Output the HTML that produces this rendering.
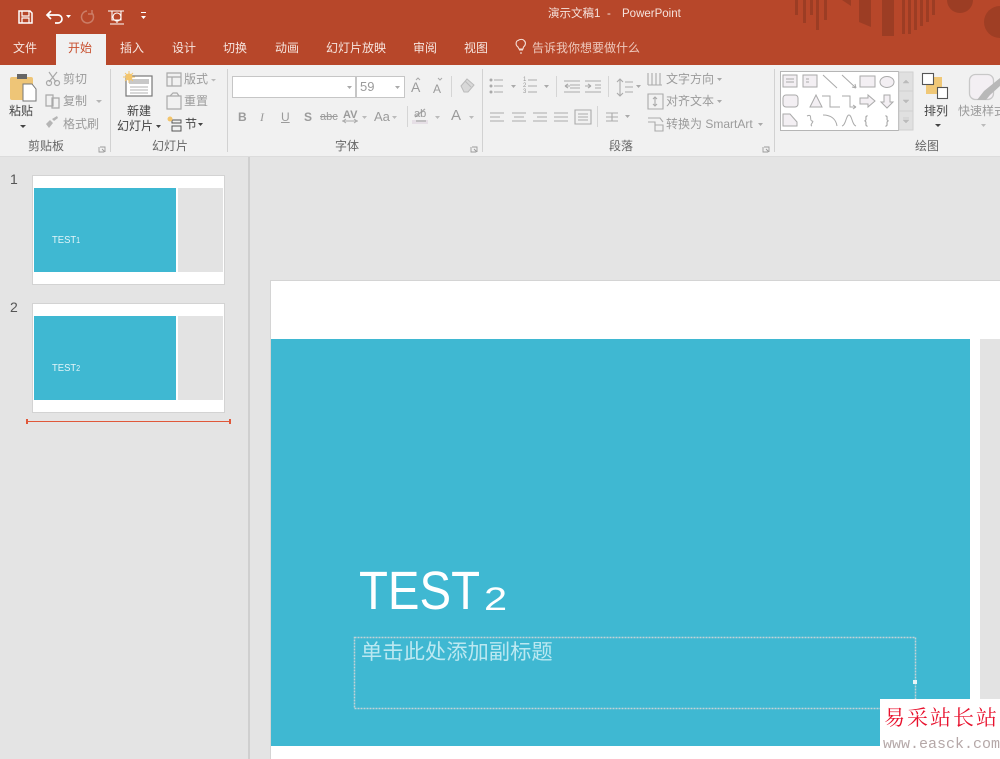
<!DOCTYPE html>
<html lang="zh"><head><meta charset="utf-8"><title>演示文稿1 - PowerPoint</title>
<style>
html,body{margin:0;padding:0}
body{width:1000px;height:759px;overflow:hidden;position:relative;background:#e4e4e4;font-family:"Liberation Sans","Noto Sans CJK SC",sans-serif}
#wrap{position:absolute;left:0;top:0;width:1000px;height:759px;filter:blur(.35px)}
.a,.t{position:absolute}
.t{white-space:nowrap;font-size:12px;line-height:14px;color:#9b9b9b}
.k{color:#444}
.l{color:#666}
.w{color:#fff}
.tab{top:41px;color:#f6e5df}
.sep{position:absolute;top:69px;height:83px;width:1px;background:#d2d2d2}
svg{position:absolute;left:0;top:0}
</style></head><body>
<div id="wrap">
<!-- title bar -->
<div class="a" style="left:0;top:0;width:1000px;height:65px;background:#b7472a"></div>
<div class="a" style="left:56px;top:34px;width:50px;height:31px;background:#f1f1f1"></div>
<div class="a" style="left:0;top:65px;width:1000px;height:91px;background:#f1f1f1;border-bottom:1px solid #dcdcdc"></div>
<div class="a" style="left:248px;top:157px;width:2px;height:602px;background:#cfcfcf"></div>

<svg width="1000" height="759" viewBox="0 0 1000 759">
 <!-- decorative pattern -->
 <g fill="#9c3d24">
  <rect x="795" y="0" width="3" height="15"/><rect x="803" y="0" width="3" height="23"/><rect x="810" y="0" width="3" height="15"/>
  <rect x="816" y="0" width="3" height="30"/><rect x="824" y="0" width="3" height="20"/>
  <path d="M842 0h9v6z"/><path d="M859 0h12v27l-12-5z"/><rect x="882" y="0" width="12" height="36"/>
  <rect x="902" y="0" width="3" height="34"/><rect x="908" y="0" width="3" height="34"/><rect x="914" y="0" width="3" height="30"/><rect x="920" y="0" width="3" height="26"/><rect x="926" y="0" width="3" height="22"/><rect x="932" y="0" width="3" height="15"/>
  <path d="M947 0h26a13 13 0 0 1-26 0z"/>
  <path d="M1000 6a16 16 0 0 0 0 32z" opacity=".9"/>
 </g>
 <!-- quick access -->
 <g fill="none" stroke="#fff" stroke-width="1.500">
  <path d="M19 11h11l2 2v10H19z"/><path d="M22 11v5h7v-5M22 23v-5h7v5" stroke-width="1.200"/>
  <path d="M48 15h10a4 4 0 0 1 0 8h-3M51 11l-4 4 4 4" stroke-width="1.700"/>
  <path d="M87 11a6 6 0 1 0 5 2M92 10v4h-4" stroke="#cb7d67"/>
  <path d="M108 11h16M112 11v9h9v-9" stroke-width="1.100"/><circle cx="117" cy="17" r="4" stroke-width="1.100"/><path d="M117 21v2M110 24h14" stroke-width="1.100"/>
 </g>
 <path d="M66 15h5l-2.500 3z" fill="#fff"/><path d="M141 12h5v1h-5zM141 16h5l-2.500 3z" fill="#fff"/>
 <!-- clipboard -->
 <rect x="10" y="77" width="23" height="23" rx="2" fill="#eec577"/>
 <rect x="17" y="74" width="10" height="5" fill="#666"/>
 <path d="M23 84h9l4 5v12H23z" fill="#fff" stroke="#777"/>
 <path d="M20 125h6l-3 3z" fill="#444"/>
 <g fill="none" stroke="#a8a8a8" stroke-width="1.200">
  <path d="M49 72l7 10M57 72l-8 10"/><circle cx="49" cy="83" r="2.500"/><circle cx="57" cy="83" r="2.500"/>
  <path d="M46 95h7v11h-7zM52 98h7v10h-7z"/>
 </g>
 <path d="M46 124l4-4 3 3-4 5zM52 119l5-3 1 2-4 3z" fill="#b5b5b5"/>
 <path d="M96 100h6l-3 3z" fill="#b5b5b5"/>
 <!-- new slide -->
 <rect x="126" y="76" width="26" height="20" fill="#fff" stroke="#777" stroke-width="1.200"/>
 <rect x="129" y="79" width="20" height="5" fill="#c8c8c8"/>
 <path d="M130 87h18M130 90h18M130 93h18" stroke="#999" stroke-width=".8"/>
 <circle cx="129" cy="77" r="3.500" fill="#f3c56c"/>
 <path d="M129 71v12M123 77h12M125 73l8 8M133 73l-8 8" stroke="#f3c56c"/>
 <path d="M156 125h5l-2.500 3zM198 123h5l-2.500 3z" fill="#444"/>
 <g fill="none" stroke="#aaa" stroke-width="1.200">
  <path d="M167 73h14v13h-14zM167 77h14M172 77v9"/>
  <path d="M167 96h14v13h-14z"/><path d="M170 96l3-3h4l2 3"/>
 </g>
 <path d="M211 79h5l-2.500 2.500z" fill="#bbb"/>
 <path d="M172 120h9v3h-9zM172 126h9v5h-9z" fill="none" stroke="#555"/>
 <circle cx="170" cy="119" r="2.500" fill="#f3c56c"/>
 <!-- font -->
 <rect x="232.500" y="76.500" width="123" height="21" fill="#fff" stroke="#c6c6c6"/>
 <rect x="356.500" y="76.500" width="48" height="21" fill="#fff" stroke="#c6c6c6"/>
 <path d="M347 86h5l-2.500 3zM395 86h5l-2.500 3z" fill="#aaa"/>
 <path d="M416 80l2-2 2 2M438 78l2 2 2-2" stroke="#aaa" fill="none"/>
 <path d="M461 86l6-7 7 6-6 7h-4zM465 81l6 6" fill="#d8d8d8" stroke="#bbb"/>
 <path d="M362 116h5l-2.500 3zM392 116h5l-2.500 3zM435 116h5l-2.500 3zM469 116h5l-2.500 3z" fill="#bbb"/>
 <rect x="412" y="120" width="16" height="4" fill="#e6dfe6"/>
 <path d="M415 117l10-8M416 121h10" stroke="#aaa" stroke-width="1.300"/>
 <path d="M342 121h16M346 119l-3 2 3 2M354 119l3 2-3 2" stroke="#aaa" fill="none"/>
 <!-- paragraph -->
 <g fill="none" stroke="#aaa" stroke-width="1.100">
  <path d="M494 80h9M494 86h9M494 92h9M528 80h9M528 86h9M528 92h9"/>
  <path d="M564 81h16M570 85h10M570 88h10M564 92h16M565 86h5M565 86l3-2M565 86l3 2"/>
  <path d="M585 81h16M591 92h10M585 92h6M585 86h6M591 86l-3-2M591 86l-3 2M595 85h6M595 88h6"/>
  <path d="M620 79v17M617 82l3-3 3 3M617 93l3 3 3-3M625 82h8M625 87h8M625 92h8"/>
  <path d="M490 113h14M490 117h10M490 121h14M512 113h14M514 117h10M512 121h14M533 113h14M537 117h10M533 121h14M554 113h14M554 117h14M554 121h14"/>
  <path d="M575 110h16v14h-16zM578 114h10M578 117h10M578 120h10M606 113h12M606 117h12M606 121h12M612 113v8"/>
 </g>
 <g fill="#aaa"><circle cx="491" cy="80" r="1.500"/><circle cx="491" cy="86" r="1.500"/><circle cx="491" cy="92" r="1.500"/>
 <path d="M511 85h5l-2.500 3zM544 85h5l-2.500 3zM636 85h5l-2.500 3zM625 115h5l-2.500 3zM717 78h5l-2.500 3zM717 100h5l-2.500 3zM758 123h5l-2.500 3z"/></g>
 <g fill="none" stroke="#aaa" stroke-width="1.100">
  <path d="M648 73v12M652 73v12M656 73v12M660 73v12M648 85h14"/>
  <path d="M648 94h15v15h-15zM655 97v9M653 99l2-2 2 2M653 104l2 2 2-2"/>
  <path d="M648 122h7v9h8v-6h-8M648 118h12l3 4"/>
 </g>
 <!-- shapes gallery -->
 <rect x="780.500" y="71.500" width="118" height="59" fill="#fff" stroke="#b5b5b5"/>
 <rect x="899" y="72" width="14" height="58" fill="#e0e0e0" stroke="#d0d0d0"/>
 <path d="M899 91h14M899 111h14" stroke="#cfcfcf"/>
 <path d="M903 83l3-3 3 3z M903 100h6l-3 3zM903 118h6M903 120h6l-3 3z" fill="#bbb" stroke="#bbb" stroke-width=".5"/>
 <g fill="#f3eff3" stroke="#aaa" stroke-width="1">
  <rect x="783" y="75" width="14" height="12"/><rect x="803" y="75" width="14" height="12"/>
  <rect x="860" y="76" width="15" height="11"/><ellipse cx="887" cy="82" rx="7" ry="5.500"/>
  <rect x="783" y="95" width="15" height="12" rx="3"/><path d="M810 107l6-12 6 12z"/>
  <path d="M860 98h8v-3l7 6-7 6v-3h-8z"/><path d="M884 95h6v7h3l-6 6-6-6h3z"/>
  <path d="M783 114h7l7 8v4h-14z"/>
 </g>
 <g fill="none" stroke="#aaa" stroke-width="1">
  <path d="M786 79h8M786 82h8M806 79h3M806 82h3"/>
  <path d="M823 75l14 13M842 75l14 13M856 88l-4-1M856 88l-1-4"/>
  <path d="M822 96h8v11h10M842 96h8v11h6M856 107l-3-2M856 107l-3 2"/>
  <path d="M807 116c6-3 2 5 5 5s-3 4 0 5"/>
  <path d="M823 115c8 0 13 4 14 11M842 126c4-1 4-11 7-11s3 10 7 11"/>
 </g>
 <!-- arrange -->
 <rect x="926" y="77" width="16" height="17" fill="#f0c877"/>
 <rect x="922.500" y="73.500" width="11" height="11" fill="#fff" stroke="#555" stroke-width="1.100"/>
 <rect x="937.500" y="87.500" width="10" height="11" fill="#fff" stroke="#555" stroke-width="1.100"/>
 <path d="M935 124h6l-3 3z" fill="#444"/>
 <rect x="969.500" y="74.500" width="24" height="25" rx="6" fill="#f3eff3" stroke="#c8c8c8" stroke-width="1.300"/>
 <path d="M977 100l7-9 16-13v8l-10 9-4 5z" fill="#b8b8b8"/>
 <path d="M981 124h5l-2.500 3z" fill="#bbb"/>
 <!-- dialog launchers -->
 <g fill="none" stroke="#9a9a9a" stroke-width=".9"><path d="M99 147v5h5M100 147h5v5M102 149l3 3"/><path d="M471 147v5h5M472 147h5v5M474 149l3 3"/><path d="M763 147v5h5M764 147h5v5M766 149l3 3"/></g>
</svg>

<div class="sep" style="left:110px"></div><div class="sep" style="left:227px"></div><div class="sep" style="left:482px"></div><div class="sep" style="left:774px"></div>
<div class="a" style="left:451px;top:76px;width:1px;height:21px;background:#d5d5d5"></div>
<div class="a" style="left:407px;top:106px;width:1px;height:21px;background:#d5d5d5"></div>
<div class="a" style="left:556px;top:76px;width:1px;height:21px;background:#d5d5d5"></div>
<div class="a" style="left:608px;top:76px;width:1px;height:21px;background:#d5d5d5"></div>
<div class="a" style="left:597px;top:106px;width:1px;height:21px;background:#d5d5d5"></div>

<!-- title and tabs -->
<div class="t" style="left:548px;top:7px;color:#f5e3dd;font-size:11.500px">演示文稿1</div>
<div class="t" style="left:607px;top:7px;color:#f5e3dd;font-size:11.500px">-</div>
<div class="t" style="left:622px;top:7px;color:#f5e3dd;font-size:11.500px">PowerPoint</div>
<div class="t tab" style="left:13px">文件</div>
<div class="t tab" style="left:68px;color:#c8502f">开始</div>
<div class="t tab" style="left:120px">插入</div>
<div class="t tab" style="left:172px">设计</div>
<div class="t tab" style="left:223px">切换</div>
<div class="t tab" style="left:275px">动画</div>
<div class="t tab" style="left:326px">幻灯片放映</div>
<div class="t tab" style="left:413px">审阅</div>
<div class="t tab" style="left:464px">视图</div>
<svg width="1000" height="70"><path d="M521 53v2M519 51h4M518 48c-3-2-2-6 0-6.500 2-1.500 5-1.500 6 0 2 1.500 2 4.500-.5 6.500l-.5 2h-4z" fill="none" stroke="#f4dcd4" stroke-width="1.100" transform="translate(0,-1)"/></svg>
<div class="t" style="left:532px;top:41px;color:#eec9bd">告诉我你想要做什么</div>

<!-- ribbon text -->
<div class="t k" style="left:9px;top:104px">粘贴</div>
<div class="t" style="left:63px;top:72px">剪切</div>
<div class="t" style="left:63px;top:94px">复制</div>
<div class="t" style="left:63px;top:117px">格式刷</div>
<div class="t l" style="left:28px;top:139px">剪贴板</div>
<div class="t k" style="left:127px;top:104px">新建</div>
<div class="t k" style="left:117px;top:119px">幻灯片</div>
<div class="t" style="left:184px;top:72px">版式</div>
<div class="t" style="left:184px;top:94px">重置</div>
<div class="t k" style="left:185px;top:117px">节</div>
<div class="t l" style="left:152px;top:139px">幻灯片</div>
<div class="t" style="left:360px;top:80px;font-size:13px">59</div>
<div class="t" style="left:411px;top:80px;font-size:14px">A</div>
<div class="t" style="left:433px;top:82px;font-size:12px">A</div>
<div class="t" style="left:238px;top:110px;font-weight:bold;font-size:12px">B</div>
<div class="t" style="left:260px;top:110px;font-style:italic;font-size:12px;font-family:'Liberation Serif',serif">I</div>
<div class="t" style="left:281px;top:110px;font-size:12px;text-decoration:underline">U</div>
<div class="t" style="left:304px;top:110px;font-weight:bold;font-size:12px">S</div>
<div class="t" style="left:320px;top:110px;font-size:11px;text-decoration:line-through">abc</div>
<div class="t" style="left:343px;top:108px;font-size:11px;font-weight:bold">AV</div>
<div class="t" style="left:374px;top:110px;font-size:13px">Aa</div>
<div class="t" style="left:414px;top:107px;font-size:11px">ab</div>
<div class="t" style="left:451px;top:109px;font-size:15px">A</div>
<div class="t" style="left:523px;top:77px;font-size:6px;line-height:6px;color:#999">1<br>2<br>3</div>
<div class="t l" style="left:335px;top:139px">字体</div>
<div class="t" style="left:666px;top:72px">文字方向</div>
<div class="t" style="left:666px;top:94px">对齐文本</div>
<div class="t" style="left:666px;top:117px">转换为 SmartArt</div>
<div class="t l" style="left:609px;top:139px">段落</div>
<div class="t" style="left:864px;top:113px">{</div>
<div class="t" style="left:885px;top:113px">}</div>
<div class="t k" style="left:924px;top:104px">排列</div>
<div class="t" style="left:958px;top:104px">快速样式</div>
<div class="t l" style="left:915px;top:139px">绘图</div>

<!-- thumbnails -->
<div class="t" style="left:10px;top:171px;font-size:14px;line-height:16px;color:#555">1</div>
<div class="a" style="left:32px;top:175px;width:191px;height:108px;background:#fff;border:1px solid #d3d3d3"></div>
<div class="a" style="left:34px;top:188px;width:142px;height:84px;background:#3fb8d2"></div>
<div class="a" style="left:178px;top:188px;width:45px;height:84px;background:#e3e3e3"></div>
<div class="t" style="left:52px;top:233px;font-size:10.500px;color:#e3f5f9;transform:scaleX(.9);transform-origin:0 0">TEST<span style="font-size:8px">1</span></div>
<div class="t" style="left:10px;top:299px;font-size:14px;line-height:16px;color:#555">2</div>
<div class="a" style="left:32px;top:303px;width:191px;height:108px;background:#fff;border:1px solid #d3d3d3"></div>
<div class="a" style="left:34px;top:316px;width:142px;height:84px;background:#3fb8d2"></div>
<div class="a" style="left:178px;top:316px;width:45px;height:84px;background:#e3e3e3"></div>
<div class="t" style="left:52px;top:361px;font-size:10.500px;color:#e3f5f9;transform:scaleX(.9);transform-origin:0 0">TEST<span style="font-size:8px">2</span></div>
<div class="a" style="left:27px;top:421px;width:204px;height:1px;background:#e0583a"></div>
<div class="a" style="left:26px;top:419px;width:2px;height:5px;background:#e0583a"></div>
<div class="a" style="left:229px;top:419px;width:2px;height:5px;background:#e0583a"></div>

<!-- main slide -->
<div class="a" style="left:270px;top:280px;width:730px;height:479px;background:#fff;border-top:1px solid #d4d4d4;border-left:1px solid #d4d4d4;box-sizing:border-box"></div>
<div class="a" style="left:271px;top:339px;width:699px;height:407px;background:#3fb8d2"></div>
<div class="a" style="left:980px;top:339px;width:20px;height:360px;background:#e3e3e3"></div>
<div class="t" style="left:359px;top:560px;font-size:54px;line-height:62px;color:#fff;transform:scaleX(.877);transform-origin:0 0">TEST</div>
<div class="t" style="left:484px;top:579px;font-size:32px;line-height:40px;color:#fff;transform:scaleX(1.3);transform-origin:0 0">2</div>
<svg width="1000" height="759"><rect x="354.500" y="637.500" width="561" height="71" fill="none" stroke="#c3d2d6" stroke-width="1.500" stroke-dasharray="2 1"/></svg>
<div class="t" style="left:361px;top:639px;font-size:21.300px;line-height:26px;color:#bbe8f1">单击此处添加副标题</div>
<div class="a" style="left:913px;top:680px;width:4px;height:4px;background:#e8f4f7"></div>
</div>

<!-- watermark -->
<div class="a" style="left:880px;top:699px;width:120px;height:60px;background:#fff"></div>
<div class="t" style="left:884px;top:705px;font-size:21px;line-height:26px;color:#e8112d;letter-spacing:2px;font-family:'Liberation Serif','Noto Serif CJK SC',serif">易采站长站</div>
<div class="t" style="left:883px;top:735px;font-size:15px;line-height:20px;color:#b5a8a8;font-family:'Liberation Mono',monospace">www.easck.com</div>
</body></html>
